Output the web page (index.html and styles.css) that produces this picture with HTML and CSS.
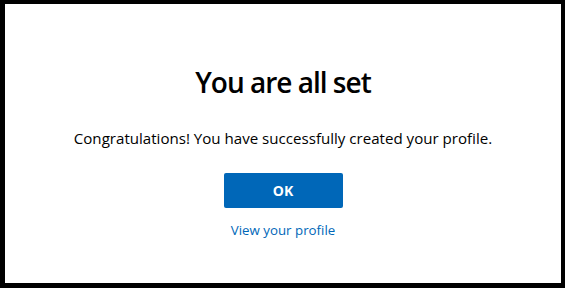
FILE: index.html
```html
<!DOCTYPE html>
<html lang="en">
<head>
  <meta charset="UTF-8">
  <title>Profile created</title>
  <link rel="stylesheet" href="styles.css">
</head>
<body>
  <!-- Confirmation dialog -->
  <div class="dialog">
    <h1 class="dialog-title">You are all set</h1>
    <p class="dialog-text">Congratulations! You have successfully created your profile.</p>
    <button class="ok-button">OK</button>
    <a class="profile-link" href="#">View your profile</a>
  </div>
</body>
</html>
```

FILE: styles.css
```css
:root {
  --primary: #0067b8;
  --dark: #000000;
}

* {
  margin: 0;
  padding: 0;
  box-sizing: border-box;
}

body {
  font-family: "Open Sans", "Noto Sans", sans-serif;
  background-color: #000;
  color: var(--dark);
  width: 565px;
  height: 288px;
  overflow: hidden;
}

.dialog {
  background-color: white;
  height: 288px;
  border-style: solid;
  border-color: #000;
  border-width: 4px 4px 5px 5px;
  display: flex;
  flex-direction: column;
  align-items: center;
  padding-top: 59px;
}

.dialog-title {
  font-size: 28px;
  font-weight: 600;
  line-height: 38px;
  letter-spacing: -1px;
  margin-bottom: 27px;
}

.dialog-text {
  font-size: 15.1px;
  line-height: 20px;
  margin-bottom: 25px;
}

.ok-button {
  width: 119px;
  height: 35px;
  background-color: var(--primary);
  color: white;
  border: none;
  border-radius: 2px;
  font-family: inherit;
  font-size: 14px;
  font-weight: 700;
  cursor: pointer;
  margin-bottom: 13px;
}

.profile-link {
  color: var(--primary);
  font-size: 13.3px;
  line-height: 18px;
  text-decoration: none;
}
```
